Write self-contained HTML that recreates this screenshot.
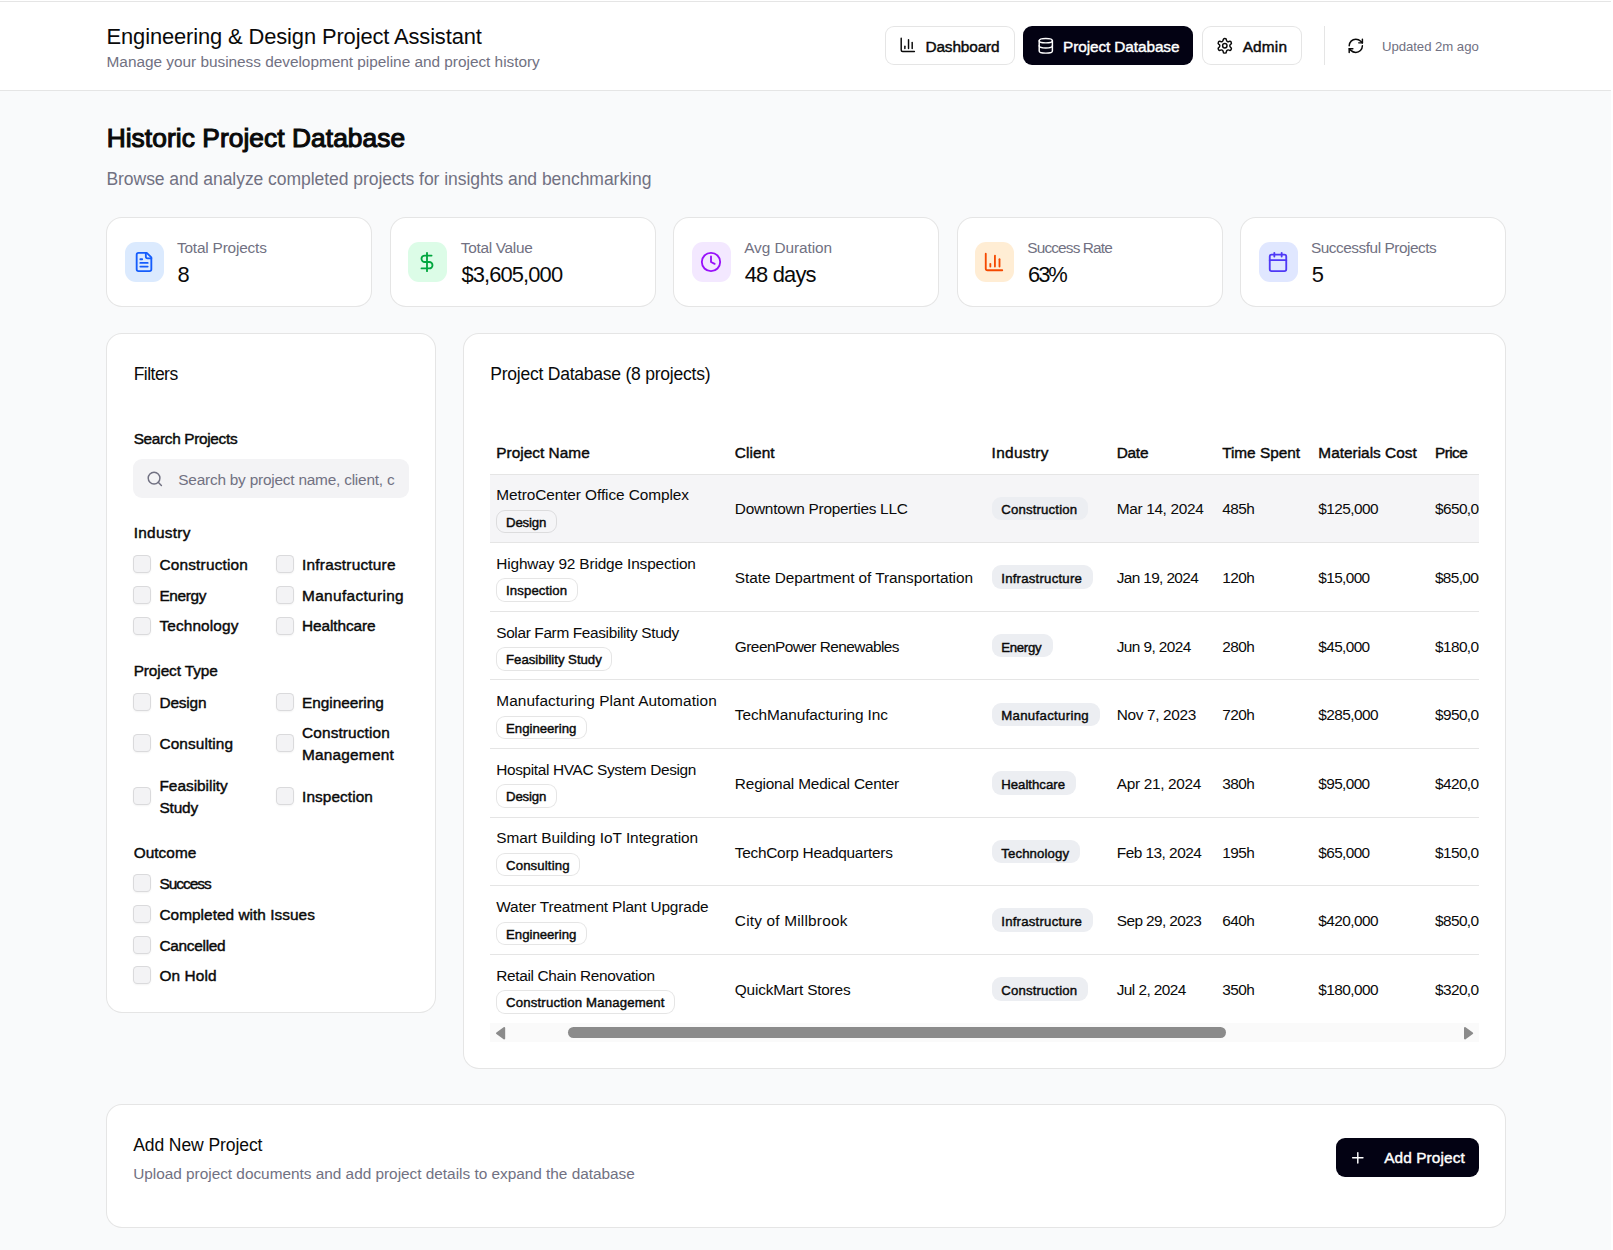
<!DOCTYPE html>
<html lang="en"><head><meta charset="utf-8"><title>Engineering &amp; Design Project Assistant</title>
<meta name="viewport" content="width=1613">
<style>
html,body{margin:0;padding:0}
body{width:1613px;height:1250px;overflow:hidden;background:#fff;font-family:"Liberation Sans",Arial,sans-serif;color:#0a0a0a;-webkit-font-smoothing:antialiased}
.page{position:absolute;left:0;top:0;width:1611px;height:1250px;background:#f9fafb;overflow:hidden}
.t{position:absolute;white-space:nowrap;margin:0;padding:0;font-weight:400}
.t.m{-webkit-text-stroke:0.42px currentColor}
.t.b{font-weight:700}
.t.s{-webkit-text-stroke:1.1px currentColor}
svg{display:block;overflow:visible}
.btn{box-sizing:border-box;display:block;margin:0;padding:0;border:0;background:none;font:inherit;color:inherit;text-align:left;cursor:pointer;-webkit-appearance:none;appearance:none;outline:none}
fieldset{display:contents;margin:0;padding:0;border:0;min-width:0}
legend{padding:0}
label.t,span.t,p.t,legend.t{display:block}
header,main,nav,section,aside{display:block}
</style></head>
<body>
<div class="page">
<div style="position:absolute;left:0.0px;top:0.0px;width:1611px;height:1px;background:#fff"></div>
<div style="position:absolute;left:0.0px;top:1.0px;width:1611px;height:1px;background:#e5e5e5"></div>
<header style="position:absolute;left:0.0px;top:2.0px;width:1611px;height:89px;box-sizing:border-box;background:#fff;border-bottom:1px solid #e5e5e5">
<h1 class="t" style="left:106.55px;top:21.80px;font-size:21.9px;line-height:25px;letter-spacing:-0.117px;">Engineering &amp; Design Project Assistant</h1>
<p class="t" style="left:106.55px;top:51.00px;font-size:15.4px;line-height:17px;letter-spacing:-0.023px;color:#717182;">Manage your business development pipeline and project history</p>
<nav aria-label="Main">
<button class="btn" type="button" style="position:absolute;left:885px;top:24px;width:130px;height:38.6px;border:1px solid rgba(0,0,0,0.1);border-radius:9px;background:#fff;">
<svg aria-hidden="true" style="position:absolute;left:12.8px;top:9.2px" width="17.6" height="17.6" viewBox="0 0 24 24" fill="none" stroke="#0a0a0a" stroke-width="2" stroke-linecap="round" stroke-linejoin="round"><path d="M3 3v16a2 2 0 0 0 2 2h16"/><path d="M18 17V9"/><path d="M13 17V5"/><path d="M8 17v-3"/></svg>
<span class="t m" style="left:39.45px;top:10.70px;font-size:15.4px;line-height:17px;letter-spacing:-0.142px;">Dashboard</span>
</button>
<button class="btn" type="button" aria-current="page" style="position:absolute;left:1023px;top:23.75px;width:170.2px;height:39.2px;border-radius:9px;background:#030213;">
<svg aria-hidden="true" style="position:absolute;left:13.7px;top:10.85px" width="17.6" height="17.6" viewBox="0 0 24 24" fill="none" stroke="#fff" stroke-width="2" stroke-linecap="round" stroke-linejoin="round"><ellipse cx="12" cy="5" rx="9" ry="3"/><path d="M3 5V19A9 3 0 0 0 21 19V5"/><path d="M3 12A9 3 0 0 0 21 12"/></svg>
<span class="t m" style="left:40.05px;top:11.85px;font-size:15.4px;line-height:17px;letter-spacing:-0.109px;color:#ffffff;">Project Database</span>
</button>
<button class="btn" type="button" style="position:absolute;left:1202px;top:24px;width:99.6px;height:38.6px;border:1px solid rgba(0,0,0,0.1);border-radius:9px;background:#fff;">
<svg aria-hidden="true" style="position:absolute;left:12.8px;top:9.7px" width="17.6" height="17.6" viewBox="0 0 24 24" fill="none" stroke="#0a0a0a" stroke-width="2" stroke-linecap="round" stroke-linejoin="round"><path d="M12.22 2h-.44a2 2 0 0 0-2 2v.18a2 2 0 0 1-1 1.73l-.43.25a2 2 0 0 1-2 0l-.15-.08a2 2 0 0 0-2.73.73l-.22.38a2 2 0 0 0 .73 2.73l.15.1a2 2 0 0 1 1 1.72v.51a2 2 0 0 1-1 1.74l-.15.09a2 2 0 0 0-.73 2.73l.22.38a2 2 0 0 0 2.73.73l.15-.08a2 2 0 0 1 2 0l.43.25a2 2 0 0 1 1 1.73V20a2 2 0 0 0 2 2h.44a2 2 0 0 0 2-2v-.18a2 2 0 0 1 1-1.73l.43-.25a2 2 0 0 1 2 0l.15.08a2 2 0 0 0 2.73-.73l.22-.39a2 2 0 0 0-.73-2.73l-.15-.08a2 2 0 0 1-1-1.74v-.5a2 2 0 0 1 1-1.74l.15-.09a2 2 0 0 0 .73-2.73l-.22-.38a2 2 0 0 0-2.73-.73l-.15.08a2 2 0 0 1-2 0l-.43-.25a2 2 0 0 1-1-1.73V4a2 2 0 0 0-2-2z"/><circle cx="12" cy="12" r="3"/></svg>
<span class="t m" style="left:39.65px;top:10.60px;font-size:15.4px;line-height:17px;letter-spacing:0.185px;">Admin</span>
</button>
</nav>
<div style="position:absolute;left:1324px;top:24px;width:1px;height:39px;background:#e5e5e5"></div>
<button class="btn" type="button" aria-label="Refresh" style="position:absolute;left:1336px;top:24px;width:40px;height:39px;border-radius:9px;background:transparent;">
<svg aria-hidden="true" style="position:absolute;left:11.1px;top:11.0px" width="17.6" height="17.6" viewBox="0 0 24 24" fill="none" stroke="#0a0a0a" stroke-width="2" stroke-linecap="round" stroke-linejoin="round"><path d="M3 12a9 9 0 0 1 9-9 9.75 9.75 0 0 1 6.74 2.74L21 8"/><path d="M21 3v5h-5"/><path d="M21 12a9 9 0 0 1-9 9 9.75 9.75 0 0 1-6.74-2.74L3 16"/><path d="M8 16H3v5"/></svg>
</button>
<span class="t" style="left:1381.95px;top:36.70px;font-size:13.2px;line-height:15px;letter-spacing:-0.054px;color:#717182;">Updated 2m ago</span>
</header>
<main>
<h2 class="t s" style="left:106.65px;top:122.90px;font-size:26.3px;line-height:30px;letter-spacing:0.074px;">Historic Project Database</h2>
<p class="t" style="left:106.45px;top:169.00px;font-size:17.55px;line-height:20px;letter-spacing:-0.056px;color:#717182;">Browse and analyze completed projects for insights and benchmarking</p>
<section aria-label="Summary statistics">
<div class="card" style="position:absolute;left:106.0px;top:217.0px;width:266px;height:90px;box-sizing:border-box;border:1px solid rgba(0,0,0,0.1);border-radius:16px;background:#fff;">
<div style="position:absolute;left:18px;top:24px;width:39px;height:40px;border-radius:11px;background:#dbeafe">
<svg aria-hidden="true" style="position:absolute;left:8.4px;top:8.85px" width="22" height="22" viewBox="0 0 24 24" fill="none" stroke="#155dfc" stroke-width="2" stroke-linecap="round" stroke-linejoin="round"><path d="M15 2H6a2 2 0 0 0-2 2v16a2 2 0 0 0 2 2h12a2 2 0 0 0 2-2V7Z"/><path d="M14 2v4a2 2 0 0 0 2 2h4"/><path d="M10 9H8"/><path d="M16 13H8"/><path d="M16 17H8"/></svg>
</div>
<p class="t" style="left:69.95px;top:21.00px;font-size:15.4px;line-height:17px;letter-spacing:-0.187px;color:#717182;">Total Projects</p>
<p class="t" style="left:70.45px;top:43.50px;font-size:21.9px;line-height:25px;">8</p>
</div>
<div class="card" style="position:absolute;left:390.0px;top:217.0px;width:266px;height:90px;box-sizing:border-box;border:1px solid rgba(0,0,0,0.1);border-radius:16px;background:#fff;">
<div style="position:absolute;left:17px;top:24px;width:39px;height:40px;border-radius:11px;background:#dcfce7">
<svg aria-hidden="true" style="position:absolute;left:8.4px;top:8.85px" width="22" height="22" viewBox="0 0 24 24" fill="none" stroke="#00a63e" stroke-width="2" stroke-linecap="round" stroke-linejoin="round"><line x1="12" x2="12" y1="2" y2="22"/><path d="M17 5H9.5a3.5 3.5 0 0 0 0 7h5a3.5 3.5 0 0 1 0 7H6"/></svg>
</div>
<p class="t" style="left:69.85px;top:21.00px;font-size:15.4px;line-height:17px;letter-spacing:-0.306px;color:#717182;">Total Value</p>
<p class="t" style="left:70.45px;top:43.50px;font-size:21.9px;line-height:25px;letter-spacing:-0.879px;">$3,605,000</p>
</div>
<div class="card" style="position:absolute;left:673.0px;top:217.0px;width:266px;height:90px;box-sizing:border-box;border:1px solid rgba(0,0,0,0.1);border-radius:16px;background:#fff;">
<div style="position:absolute;left:18px;top:24px;width:39px;height:40px;border-radius:11px;background:#f3e8ff">
<svg aria-hidden="true" style="position:absolute;left:8.4px;top:8.85px" width="22" height="22" viewBox="0 0 24 24" fill="none" stroke="#9810fa" stroke-width="2" stroke-linecap="round" stroke-linejoin="round"><circle cx="12" cy="12" r="10"/><polyline points="12 6 12 12 16 14"/></svg>
</div>
<p class="t" style="left:70.15px;top:21.00px;font-size:15.4px;line-height:17px;letter-spacing:-0.068px;color:#717182;">Avg Duration</p>
<p class="t" style="left:70.65px;top:43.50px;font-size:21.9px;line-height:25px;letter-spacing:-0.799px;">48 days</p>
</div>
<div class="card" style="position:absolute;left:957.0px;top:217.0px;width:266px;height:90px;box-sizing:border-box;border:1px solid rgba(0,0,0,0.1);border-radius:16px;background:#fff;">
<div style="position:absolute;left:17px;top:24px;width:39px;height:40px;border-radius:11px;background:#ffedd4">
<svg aria-hidden="true" style="position:absolute;left:8.4px;top:8.85px" width="22" height="22" viewBox="0 0 24 24" fill="none" stroke="#f54900" stroke-width="2" stroke-linecap="round" stroke-linejoin="round"><path d="M3 3v16a2 2 0 0 0 2 2h16"/><path d="M18 17V9"/><path d="M13 17V5"/><path d="M8 17v-3"/></svg>
</div>
<p class="t" style="left:69.35px;top:21.00px;font-size:15.4px;line-height:17px;letter-spacing:-0.864px;color:#717182;">Success Rate</p>
<p class="t" style="left:70.05px;top:43.50px;font-size:21.9px;line-height:25px;letter-spacing:-2.061px;">63%</p>
</div>
<div class="card" style="position:absolute;left:1240.0px;top:217.0px;width:266px;height:90px;box-sizing:border-box;border:1px solid rgba(0,0,0,0.1);border-radius:16px;background:#fff;">
<div style="position:absolute;left:18px;top:24px;width:39px;height:40px;border-radius:11px;background:#e0e7ff">
<svg aria-hidden="true" style="position:absolute;left:8.4px;top:8.85px" width="22" height="22" viewBox="0 0 24 24" fill="none" stroke="#4f39f6" stroke-width="2" stroke-linecap="round" stroke-linejoin="round"><path d="M8 2v4"/><path d="M16 2v4"/><rect width="18" height="18" x="3" y="4" rx="2"/><path d="M3 10h18"/></svg>
</div>
<p class="t" style="left:69.95px;top:21.00px;font-size:15.4px;line-height:17px;letter-spacing:-0.471px;color:#717182;">Successful Projects</p>
<p class="t" style="left:70.85px;top:43.50px;font-size:21.9px;line-height:25px;">5</p>
</div>
</section>
<aside class="card" aria-label="Filters" style="position:absolute;left:106.0px;top:333.0px;width:330px;height:680px;box-sizing:border-box;border:1px solid rgba(0,0,0,0.1);border-radius:16px;background:#fff;">
<h3 class="t" style="left:26.65px;top:29.60px;font-size:17.55px;line-height:20px;letter-spacing:-0.529px;">Filters</h3>
<label class="t m" style="left:26.65px;top:96.30px;font-size:15.4px;line-height:17px;letter-spacing:-0.336px;">Search Projects</label>
<div role="searchbox" aria-label="Search Projects" style="position:absolute;left:26px;top:125px;width:276px;height:38.8px;border-radius:9px;background:#f3f3f5">
<svg aria-hidden="true" style="position:absolute;left:13.4px;top:10.7px" width="17.6" height="17.6" viewBox="0 0 24 24" fill="none" stroke="#717182" stroke-width="2" stroke-linecap="round" stroke-linejoin="round"><circle cx="11" cy="11" r="8"/><path d="m21 21-4.3-4.3"/></svg>
<span class="t" style="left:45.25px;top:12.00px;font-size:15.4px;line-height:17px;letter-spacing:-0.216px;color:#717182;">Search by project name, client, c</span>
</div>
<fieldset>
<legend class="t m" style="left:26.65px;top:190.30px;font-size:15.4px;line-height:17px;letter-spacing:0.289px;">Industry</legend>
<span role="checkbox" aria-checked="false" aria-label="Construction" style="position:absolute;left:26px;top:221.3px;width:18px;height:18px;box-sizing:border-box;border:1px solid rgba(0,0,0,0.1);border-radius:4.5px;background:#f3f3f5;box-shadow:0 1px 2px rgba(0,0,0,0.05)"></span>
<label class="t m" style="left:52.45px;top:221.80px;font-size:15.4px;line-height:17px;letter-spacing:0.186px;">Construction</label>
<span role="checkbox" aria-checked="false" aria-label="Infrastructure" style="position:absolute;left:169px;top:221.3px;width:18px;height:18px;box-sizing:border-box;border:1px solid rgba(0,0,0,0.1);border-radius:4.5px;background:#f3f3f5;box-shadow:0 1px 2px rgba(0,0,0,0.05)"></span>
<label class="t m" style="left:195.05px;top:221.80px;font-size:15.4px;line-height:17px;letter-spacing:0.214px;">Infrastructure</label>
<span role="checkbox" aria-checked="false" aria-label="Energy" style="position:absolute;left:26px;top:252px;width:18px;height:18px;box-sizing:border-box;border:1px solid rgba(0,0,0,0.1);border-radius:4.5px;background:#f3f3f5;box-shadow:0 1px 2px rgba(0,0,0,0.05)"></span>
<label class="t m" style="left:52.45px;top:252.50px;font-size:15.4px;line-height:17px;letter-spacing:-0.357px;">Energy</label>
<span role="checkbox" aria-checked="false" aria-label="Manufacturing" style="position:absolute;left:169px;top:252px;width:18px;height:18px;box-sizing:border-box;border:1px solid rgba(0,0,0,0.1);border-radius:4.5px;background:#f3f3f5;box-shadow:0 1px 2px rgba(0,0,0,0.05)"></span>
<label class="t m" style="left:195.05px;top:252.50px;font-size:15.4px;line-height:17px;letter-spacing:0.334px;">Manufacturing</label>
<span role="checkbox" aria-checked="false" aria-label="Technology" style="position:absolute;left:26px;top:282.6px;width:18px;height:18px;box-sizing:border-box;border:1px solid rgba(0,0,0,0.1);border-radius:4.5px;background:#f3f3f5;box-shadow:0 1px 2px rgba(0,0,0,0.05)"></span>
<label class="t m" style="left:52.45px;top:283.10px;font-size:15.4px;line-height:17px;letter-spacing:0.121px;">Technology</label>
<span role="checkbox" aria-checked="false" aria-label="Healthcare" style="position:absolute;left:169px;top:282.6px;width:18px;height:18px;box-sizing:border-box;border:1px solid rgba(0,0,0,0.1);border-radius:4.5px;background:#f3f3f5;box-shadow:0 1px 2px rgba(0,0,0,0.05)"></span>
<label class="t m" style="left:195.05px;top:283.10px;font-size:15.4px;line-height:17px;letter-spacing:-0.097px;">Healthcare</label>
</fieldset>
<fieldset>
<legend class="t m" style="left:26.65px;top:327.80px;font-size:15.4px;line-height:17px;letter-spacing:-0.092px;">Project Type</legend>
<span role="checkbox" aria-checked="false" aria-label="Design" style="position:absolute;left:26px;top:359px;width:18px;height:18px;box-sizing:border-box;border:1px solid rgba(0,0,0,0.1);border-radius:4.5px;background:#f3f3f5;box-shadow:0 1px 2px rgba(0,0,0,0.05)"></span>
<label class="t m" style="left:52.45px;top:359.70px;font-size:15.4px;line-height:17px;letter-spacing:-0.168px;">Design</label>
<span role="checkbox" aria-checked="false" aria-label="Engineering" style="position:absolute;left:169px;top:359px;width:18px;height:18px;box-sizing:border-box;border:1px solid rgba(0,0,0,0.1);border-radius:4.5px;background:#f3f3f5;box-shadow:0 1px 2px rgba(0,0,0,0.05)"></span>
<label class="t m" style="left:195.05px;top:359.70px;font-size:15.4px;line-height:17px;letter-spacing:-0.039px;">Engineering</label>
<span role="checkbox" aria-checked="false" aria-label="Consulting" style="position:absolute;left:26px;top:400px;width:18px;height:18px;box-sizing:border-box;border:1px solid rgba(0,0,0,0.1);border-radius:4.5px;background:#f3f3f5;box-shadow:0 1px 2px rgba(0,0,0,0.05)"></span>
<label class="t m" style="left:52.45px;top:401.10px;font-size:15.4px;line-height:17px;letter-spacing:0.093px;">Consulting</label>
<span role="checkbox" aria-checked="false" aria-label="Construction Management" style="position:absolute;left:169px;top:400px;width:18px;height:18px;box-sizing:border-box;border:1px solid rgba(0,0,0,0.1);border-radius:4.5px;background:#f3f3f5;box-shadow:0 1px 2px rgba(0,0,0,0.05)"></span>
<label class="t m" style="left:195.05px;top:390.00px;font-size:15.4px;line-height:17px;letter-spacing:0.122px;">Construction</label>
<label class="t m" style="left:195.05px;top:411.80px;font-size:15.4px;line-height:17px;letter-spacing:0.201px;">Management</label>
<span role="checkbox" aria-checked="false" aria-label="Feasibility Study" style="position:absolute;left:26px;top:453px;width:18px;height:18px;box-sizing:border-box;border:1px solid rgba(0,0,0,0.1);border-radius:4.5px;background:#f3f3f5;box-shadow:0 1px 2px rgba(0,0,0,0.05)"></span>
<label class="t m" style="left:52.45px;top:442.80px;font-size:15.4px;line-height:17px;letter-spacing:-0.007px;">Feasibility</label>
<label class="t m" style="left:52.45px;top:464.90px;font-size:15.4px;line-height:17px;letter-spacing:-0.169px;">Study</label>
<span role="checkbox" aria-checked="false" aria-label="Inspection" style="position:absolute;left:169px;top:453px;width:18px;height:18px;box-sizing:border-box;border:1px solid rgba(0,0,0,0.1);border-radius:4.5px;background:#f3f3f5;box-shadow:0 1px 2px rgba(0,0,0,0.05)"></span>
<label class="t m" style="left:195.05px;top:453.70px;font-size:15.4px;line-height:17px;letter-spacing:0.077px;">Inspection</label>
</fieldset>
<fieldset>
<legend class="t m" style="left:26.65px;top:510.30px;font-size:15.4px;line-height:17px;letter-spacing:0.037px;">Outcome</legend>
<span role="checkbox" aria-checked="false" aria-label="Success" style="position:absolute;left:26px;top:540px;width:18px;height:18px;box-sizing:border-box;border:1px solid rgba(0,0,0,0.1);border-radius:4.5px;background:#f3f3f5;box-shadow:0 1px 2px rgba(0,0,0,0.05)"></span>
<label class="t m" style="left:52.45px;top:541.00px;font-size:15.4px;line-height:17px;letter-spacing:-0.983px;">Success</label>
<span role="checkbox" aria-checked="false" aria-label="Completed with Issues" style="position:absolute;left:26px;top:571px;width:18px;height:18px;box-sizing:border-box;border:1px solid rgba(0,0,0,0.1);border-radius:4.5px;background:#f3f3f5;box-shadow:0 1px 2px rgba(0,0,0,0.05)"></span>
<label class="t m" style="left:52.45px;top:572.00px;font-size:15.4px;line-height:17px;letter-spacing:0.029px;">Completed with Issues</label>
<span role="checkbox" aria-checked="false" aria-label="Cancelled" style="position:absolute;left:26px;top:602px;width:18px;height:18px;box-sizing:border-box;border:1px solid rgba(0,0,0,0.1);border-radius:4.5px;background:#f3f3f5;box-shadow:0 1px 2px rgba(0,0,0,0.05)"></span>
<label class="t m" style="left:52.45px;top:602.90px;font-size:15.4px;line-height:17px;letter-spacing:-0.285px;">Cancelled</label>
<span role="checkbox" aria-checked="false" aria-label="On Hold" style="position:absolute;left:26px;top:632px;width:18px;height:18px;box-sizing:border-box;border:1px solid rgba(0,0,0,0.1);border-radius:4.5px;background:#f3f3f5;box-shadow:0 1px 2px rgba(0,0,0,0.05)"></span>
<label class="t m" style="left:52.45px;top:633.00px;font-size:15.4px;line-height:17px;letter-spacing:0.119px;">On Hold</label>
</fieldset>
</aside>
<section class="card" aria-label="Project Database" style="position:absolute;left:463.0px;top:333.0px;width:1043px;height:736px;box-sizing:border-box;border:1px solid rgba(0,0,0,0.1);border-radius:16px;background:#fff;">
<h3 class="t" style="left:26.25px;top:29.60px;font-size:17.55px;line-height:20px;letter-spacing:-0.242px;">Project Database (8 projects)</h3>
<div role="table" aria-label="Projects" style="position:absolute;left:26px;top:96px;width:989px;height:612px;overflow:hidden">
<div role="row">
<div class="t m" role="columnheader" style="left:6.25px;top:14.20px;font-size:15.4px;line-height:17px;letter-spacing:0.019px;">Project Name</div>
<div class="t m" role="columnheader" style="left:244.85px;top:14.20px;font-size:15.4px;line-height:17px;letter-spacing:0.084px;">Client</div>
<div class="t m" role="columnheader" style="left:501.55px;top:14.20px;font-size:15.4px;line-height:17px;letter-spacing:0.317px;">Industry</div>
<div class="t m" role="columnheader" style="left:626.75px;top:14.20px;font-size:15.4px;line-height:17px;letter-spacing:-0.275px;">Date</div>
<div class="t m" role="columnheader" style="left:732.15px;top:14.20px;font-size:15.4px;line-height:17px;letter-spacing:-0.030px;">Time Spent</div>
<div class="t m" role="columnheader" style="left:828.35px;top:14.20px;font-size:15.4px;line-height:17px;">Materials Cost</div>
<div class="t m" role="columnheader" style="left:944.95px;top:14.20px;font-size:15.4px;line-height:17px;letter-spacing:-0.545px;">Price</div>
</div>
<div style="position:absolute;left:0px;top:44px;width:1100px;height:1px;background:#e5e5e5"></div>
<div role="row">
<div style="position:absolute;left:0px;top:45px;width:1100px;height:67px;background:#f5f5f7"></div>
<div style="position:absolute;left:0px;top:112px;width:1100px;height:1px;background:#e5e5e5"></div>
<div class="t" role="cell" style="left:6.25px;top:56.30px;font-size:15.4px;line-height:17px;letter-spacing:-0.082px;">MetroCenter Office Complex</div>
<span class="badge" style="position:absolute;left:6px;top:79.75px;width:61px;height:23.55px;box-sizing:border-box;border:1px solid rgba(0,0,0,0.1);border-radius:9px;background:transparent">
<span class="t m" style="left:9.05px;top:4.05px;font-size:13.2px;line-height:15px;letter-spacing:-0.158px;">Design</span>
</span>
<div class="t" role="cell" style="left:244.85px;top:70.40px;font-size:15.4px;line-height:17px;letter-spacing:-0.264px;">Downtown Properties LLC</div>
<span class="badge" role="cell" style="position:absolute;left:502px;top:66.7px;width:96px;height:23.5px;border-radius:9px;background:#eceef2">
<span class="t m" style="left:9.25px;top:5.70px;font-size:13.2px;line-height:15px;letter-spacing:0.163px;">Construction</span>
</span>
<div class="t" role="cell" style="left:626.75px;top:70.40px;font-size:15.4px;line-height:17px;letter-spacing:-0.341px;">Mar 14, 2024</div>
<div class="t" role="cell" style="left:732.15px;top:70.40px;font-size:15.4px;line-height:17px;letter-spacing:-0.555px;">485h</div>
<div class="t" role="cell" style="left:828.35px;top:70.40px;font-size:15.4px;line-height:17px;letter-spacing:-0.576px;">$125,000</div>
<div class="t" role="cell" style="left:944.95px;top:70.40px;font-size:15.4px;line-height:17px;letter-spacing:-0.576px;">$650,000</div>
</div>
<div role="row">
<div style="position:absolute;left:0px;top:181px;width:1100px;height:1px;background:#e5e5e5"></div>
<div class="t" role="cell" style="left:6.25px;top:124.92px;font-size:15.4px;line-height:17px;letter-spacing:-0.146px;">Highway 92 Bridge Inspection</div>
<span class="badge" style="position:absolute;left:6px;top:148.375px;width:82px;height:23.55px;box-sizing:border-box;border:1px solid rgba(0,0,0,0.1);border-radius:9px;background:#fff">
<span class="t m" style="left:9.05px;top:4.05px;font-size:13.2px;line-height:15px;letter-spacing:0.102px;">Inspection</span>
</span>
<div class="t" role="cell" style="left:244.85px;top:139.02px;font-size:15.4px;line-height:17px;letter-spacing:-0.068px;">State Department of Transportation</div>
<span class="badge" role="cell" style="position:absolute;left:502px;top:135.325px;width:101px;height:23.5px;border-radius:9px;background:#eceef2">
<span class="t m" style="left:9.25px;top:5.70px;font-size:13.2px;line-height:15px;letter-spacing:0.226px;">Infrastructure</span>
</span>
<div class="t" role="cell" style="left:626.75px;top:139.02px;font-size:15.4px;line-height:17px;letter-spacing:-0.642px;">Jan 19, 2024</div>
<div class="t" role="cell" style="left:732.15px;top:139.02px;font-size:15.4px;line-height:17px;letter-spacing:-0.555px;">120h</div>
<div class="t" role="cell" style="left:828.35px;top:139.02px;font-size:15.4px;line-height:17px;letter-spacing:-0.645px;">$15,000</div>
<div class="t" role="cell" style="left:944.95px;top:139.02px;font-size:15.4px;line-height:17px;letter-spacing:-0.645px;">$85,000</div>
</div>
<div role="row">
<div style="position:absolute;left:0px;top:249px;width:1100px;height:1px;background:#e5e5e5"></div>
<div class="t" role="cell" style="left:6.25px;top:193.55px;font-size:15.4px;line-height:17px;letter-spacing:-0.350px;">Solar Farm Feasibility Study</div>
<span class="badge" style="position:absolute;left:6px;top:217.0px;width:116px;height:23.55px;box-sizing:border-box;border:1px solid rgba(0,0,0,0.1);border-radius:9px;background:#fff">
<span class="t m" style="left:9.05px;top:4.05px;font-size:13.2px;line-height:15px;letter-spacing:-0.019px;">Feasibility Study</span>
</span>
<div class="t" role="cell" style="left:244.85px;top:207.65px;font-size:15.4px;line-height:17px;letter-spacing:-0.534px;">GreenPower Renewables</div>
<span class="badge" role="cell" style="position:absolute;left:502px;top:203.95px;width:61px;height:23.5px;border-radius:9px;background:#eceef2">
<span class="t m" style="left:9.25px;top:5.70px;font-size:13.2px;line-height:15px;letter-spacing:-0.304px;">Energy</span>
</span>
<div class="t" role="cell" style="left:626.75px;top:207.65px;font-size:15.4px;line-height:17px;letter-spacing:-0.600px;">Jun 9, 2024</div>
<div class="t" role="cell" style="left:732.15px;top:207.65px;font-size:15.4px;line-height:17px;letter-spacing:-0.555px;">280h</div>
<div class="t" role="cell" style="left:828.35px;top:207.65px;font-size:15.4px;line-height:17px;letter-spacing:-0.645px;">$45,000</div>
<div class="t" role="cell" style="left:944.95px;top:207.65px;font-size:15.4px;line-height:17px;letter-spacing:-0.576px;">$180,000</div>
</div>
<div role="row">
<div style="position:absolute;left:0px;top:318px;width:1100px;height:1px;background:#e5e5e5"></div>
<div class="t" role="cell" style="left:6.25px;top:262.17px;font-size:15.4px;line-height:17px;letter-spacing:0.079px;">Manufacturing Plant Automation</div>
<span class="badge" style="position:absolute;left:6px;top:285.625px;width:91px;height:23.55px;box-sizing:border-box;border:1px solid rgba(0,0,0,0.1);border-radius:9px;background:#fff">
<span class="t m" style="left:9.05px;top:4.05px;font-size:13.2px;line-height:15px;letter-spacing:-0.015px;">Engineering</span>
</span>
<div class="t" role="cell" style="left:244.85px;top:276.27px;font-size:15.4px;line-height:17px;letter-spacing:-0.087px;">TechManufacturing Inc</div>
<span class="badge" role="cell" style="position:absolute;left:502px;top:272.575px;width:108px;height:23.5px;border-radius:9px;background:#eceef2">
<span class="t m" style="left:9.25px;top:5.70px;font-size:13.2px;line-height:15px;letter-spacing:0.321px;">Manufacturing</span>
</span>
<div class="t" role="cell" style="left:626.75px;top:276.27px;font-size:15.4px;line-height:17px;letter-spacing:-0.355px;">Nov 7, 2023</div>
<div class="t" role="cell" style="left:732.15px;top:276.27px;font-size:15.4px;line-height:17px;letter-spacing:-0.555px;">720h</div>
<div class="t" role="cell" style="left:828.35px;top:276.27px;font-size:15.4px;line-height:17px;letter-spacing:-0.576px;">$285,000</div>
<div class="t" role="cell" style="left:944.95px;top:276.27px;font-size:15.4px;line-height:17px;letter-spacing:-0.576px;">$950,000</div>
</div>
<div role="row">
<div style="position:absolute;left:0px;top:387px;width:1100px;height:1px;background:#e5e5e5"></div>
<div class="t" role="cell" style="left:6.25px;top:330.80px;font-size:15.4px;line-height:17px;letter-spacing:-0.354px;">Hospital HVAC System Design</div>
<span class="badge" style="position:absolute;left:6px;top:354.25px;width:61px;height:23.55px;box-sizing:border-box;border:1px solid rgba(0,0,0,0.1);border-radius:9px;background:#fff">
<span class="t m" style="left:9.05px;top:4.05px;font-size:13.2px;line-height:15px;letter-spacing:-0.158px;">Design</span>
</span>
<div class="t" role="cell" style="left:244.85px;top:344.90px;font-size:15.4px;line-height:17px;letter-spacing:-0.192px;">Regional Medical Center</div>
<span class="badge" role="cell" style="position:absolute;left:502px;top:341.2px;width:84px;height:23.5px;border-radius:9px;background:#eceef2">
<span class="t m" style="left:9.25px;top:5.70px;font-size:13.2px;line-height:15px;">Healthcare</span>
</span>
<div class="t" role="cell" style="left:626.75px;top:344.90px;font-size:15.4px;line-height:17px;letter-spacing:-0.327px;">Apr 21, 2024</div>
<div class="t" role="cell" style="left:732.15px;top:344.90px;font-size:15.4px;line-height:17px;letter-spacing:-0.555px;">380h</div>
<div class="t" role="cell" style="left:828.35px;top:344.90px;font-size:15.4px;line-height:17px;letter-spacing:-0.645px;">$95,000</div>
<div class="t" role="cell" style="left:944.95px;top:344.90px;font-size:15.4px;line-height:17px;letter-spacing:-0.576px;">$420,000</div>
</div>
<div role="row">
<div style="position:absolute;left:0px;top:455px;width:1100px;height:1px;background:#e5e5e5"></div>
<div class="t" role="cell" style="left:6.25px;top:399.42px;font-size:15.4px;line-height:17px;letter-spacing:-0.050px;">Smart Building IoT Integration</div>
<span class="badge" style="position:absolute;left:6px;top:422.875px;width:84px;height:23.55px;box-sizing:border-box;border:1px solid rgba(0,0,0,0.1);border-radius:9px;background:#fff">
<span class="t m" style="left:9.05px;top:4.05px;font-size:13.2px;line-height:15px;letter-spacing:0.126px;">Consulting</span>
</span>
<div class="t" role="cell" style="left:244.85px;top:413.52px;font-size:15.4px;line-height:17px;letter-spacing:-0.270px;">TechCorp Headquarters</div>
<span class="badge" role="cell" style="position:absolute;left:502px;top:409.825px;width:88px;height:23.5px;border-radius:9px;background:#eceef2">
<span class="t m" style="left:9.25px;top:5.70px;font-size:13.2px;line-height:15px;letter-spacing:0.125px;">Technology</span>
</span>
<div class="t" role="cell" style="left:626.75px;top:413.52px;font-size:15.4px;line-height:17px;letter-spacing:-0.515px;">Feb 13, 2024</div>
<div class="t" role="cell" style="left:732.15px;top:413.52px;font-size:15.4px;line-height:17px;letter-spacing:-0.555px;">195h</div>
<div class="t" role="cell" style="left:828.35px;top:413.52px;font-size:15.4px;line-height:17px;letter-spacing:-0.645px;">$65,000</div>
<div class="t" role="cell" style="left:944.95px;top:413.52px;font-size:15.4px;line-height:17px;letter-spacing:-0.576px;">$150,000</div>
</div>
<div role="row">
<div style="position:absolute;left:0px;top:524px;width:1100px;height:1px;background:#e5e5e5"></div>
<div class="t" role="cell" style="left:6.25px;top:468.05px;font-size:15.4px;line-height:17px;letter-spacing:-0.155px;">Water Treatment Plant Upgrade</div>
<span class="badge" style="position:absolute;left:6px;top:491.5px;width:91px;height:23.55px;box-sizing:border-box;border:1px solid rgba(0,0,0,0.1);border-radius:9px;background:#fff">
<span class="t m" style="left:9.05px;top:4.05px;font-size:13.2px;line-height:15px;letter-spacing:-0.015px;">Engineering</span>
</span>
<div class="t" role="cell" style="left:244.85px;top:482.15px;font-size:15.4px;line-height:17px;letter-spacing:0.189px;">City of Millbrook</div>
<span class="badge" role="cell" style="position:absolute;left:502px;top:478.45px;width:101px;height:23.5px;border-radius:9px;background:#eceef2">
<span class="t m" style="left:9.25px;top:5.70px;font-size:13.2px;line-height:15px;letter-spacing:0.226px;">Infrastructure</span>
</span>
<div class="t" role="cell" style="left:626.75px;top:482.15px;font-size:15.4px;line-height:17px;letter-spacing:-0.594px;">Sep 29, 2023</div>
<div class="t" role="cell" style="left:732.15px;top:482.15px;font-size:15.4px;line-height:17px;letter-spacing:-0.555px;">640h</div>
<div class="t" role="cell" style="left:828.35px;top:482.15px;font-size:15.4px;line-height:17px;letter-spacing:-0.576px;">$420,000</div>
<div class="t" role="cell" style="left:944.95px;top:482.15px;font-size:15.4px;line-height:17px;letter-spacing:-0.576px;">$850,000</div>
</div>
<div role="row">
<div class="t" role="cell" style="left:6.25px;top:536.67px;font-size:15.4px;line-height:17px;letter-spacing:-0.331px;">Retail Chain Renovation</div>
<span class="badge" style="position:absolute;left:6px;top:560.125px;width:179px;height:23.55px;box-sizing:border-box;border:1px solid rgba(0,0,0,0.1);border-radius:9px;background:#fff">
<span class="t m" style="left:9.05px;top:4.05px;font-size:13.2px;line-height:15px;letter-spacing:0.172px;">Construction Management</span>
</span>
<div class="t" role="cell" style="left:244.85px;top:550.77px;font-size:15.4px;line-height:17px;letter-spacing:-0.210px;">QuickMart Stores</div>
<span class="badge" role="cell" style="position:absolute;left:502px;top:547.075px;width:96px;height:23.5px;border-radius:9px;background:#eceef2">
<span class="t m" style="left:9.25px;top:5.70px;font-size:13.2px;line-height:15px;letter-spacing:0.163px;">Construction</span>
</span>
<div class="t" role="cell" style="left:626.75px;top:550.77px;font-size:15.4px;line-height:17px;letter-spacing:-0.575px;">Jul 2, 2024</div>
<div class="t" role="cell" style="left:732.15px;top:550.77px;font-size:15.4px;line-height:17px;letter-spacing:-0.555px;">350h</div>
<div class="t" role="cell" style="left:828.35px;top:550.77px;font-size:15.4px;line-height:17px;letter-spacing:-0.576px;">$180,000</div>
<div class="t" role="cell" style="left:944.95px;top:550.77px;font-size:15.4px;line-height:17px;letter-spacing:-0.576px;">$320,000</div>
</div>
<div role="scrollbar" aria-orientation="horizontal" aria-hidden="true" style="position:absolute;left:0px;top:593px;width:989px;height:19px;background:#fafafa">
<div style="position:absolute;left:78px;top:4px;width:658px;height:11px;border-radius:5.5px;background:#8b8b8b"></div>
<div style="position:absolute;left:5.9px;top:3.8px;width:9.2px;height:12.4px;"><svg aria-hidden="true" width="9.2" height="12.4" viewBox="0 0 9.2 12.4" style="display:block"><path d="M8.2 1 L1 6.2 L8.2 11.4 Z" fill="#8b8b8b" stroke="#8b8b8b" stroke-width="2" stroke-linejoin="round"/></svg></div>
<div style="position:absolute;left:974.0px;top:3.9px;width:9.2px;height:12.4px;"><svg aria-hidden="true" width="9.2" height="12.4" viewBox="0 0 9.2 12.4" style="display:block"><path d="M1 1 L8.2 6.2 L1 11.4 Z" fill="#8b8b8b" stroke="#8b8b8b" stroke-width="2" stroke-linejoin="round"/></svg></div>
</div>
</div>
</section>
<section class="card" aria-label="Add New Project" style="position:absolute;left:106.0px;top:1104.0px;width:1400px;height:123.5px;box-sizing:border-box;border:1px solid rgba(0,0,0,0.1);border-radius:16px;background:#fff;">
<h3 class="t" style="left:26.15px;top:30.40px;font-size:17.55px;line-height:20px;letter-spacing:-0.087px;">Add New Project</h3>
<p class="t" style="left:26.15px;top:60.30px;font-size:15.4px;line-height:17px;letter-spacing:-0.020px;color:#717182;">Upload project documents and add project details to expand the database</p>
<button class="btn" type="button" style="position:absolute;left:1229px;top:33px;width:143px;height:39px;border-radius:9px;background:#030213;">
<svg aria-hidden="true" style="position:absolute;left:13.1px;top:11.0px" width="17.6" height="17.6" viewBox="0 0 24 24" fill="none" stroke="#fff" stroke-width="2" stroke-linecap="round" stroke-linejoin="round"><path d="M5 12h14"/><path d="M12 5v14"/></svg>
<span class="t m" style="left:48.15px;top:10.60px;font-size:15.4px;line-height:17px;letter-spacing:0.100px;color:#ffffff;">Add Project</span>
</button>
</section>
</main>
</div>
</body></html>
